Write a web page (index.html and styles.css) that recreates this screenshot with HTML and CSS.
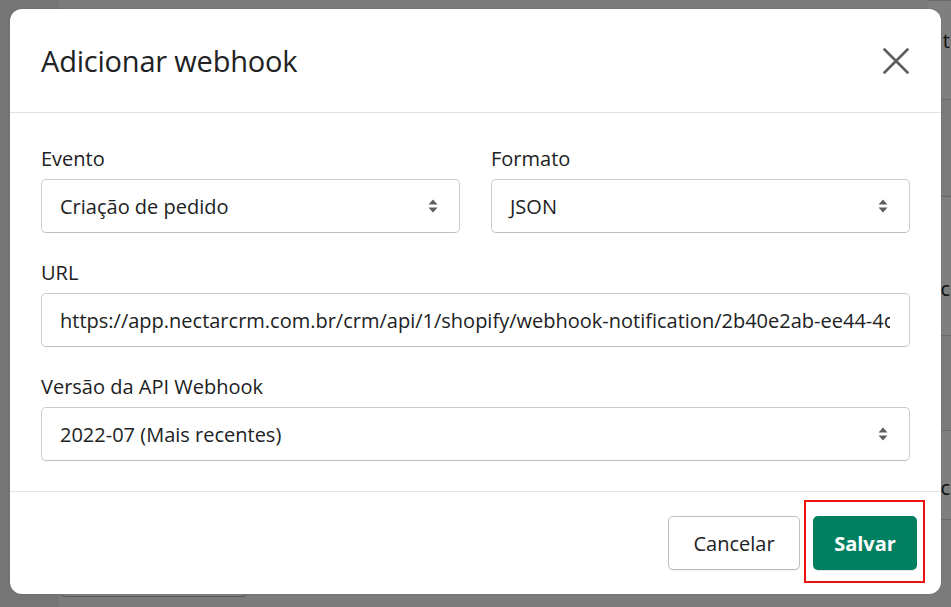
FILE: index.html
```html
<!DOCTYPE html>
<html lang="pt-BR">
<head>
<meta charset="utf-8">
<title>Adicionar webhook</title>
<link rel="stylesheet" href="styles.css">
</head>
<body>
<div class="page">
  <aside class="side"></aside>
  <main class="content">
    <div class="bg-card bg-card-top"><span class="bg-text bg-t1">t</span></div>
    <div class="bg-card bg-card-mid"><span class="bg-text bg-t2">c</span></div>
    <div class="bg-card bg-card-low"><span class="bg-text bg-t3">ic</span></div>
    <div class="bg-button"></div>
  </main>
</div>

<div class="overlay">
  <div class="modal">
    <header class="modal-header">
      <h1 class="modal-title">Adicionar webhook</h1>
      <button class="close" aria-label="Fechar">
        <svg width="26" height="26" viewBox="0 0 26 26"><path d="M1.5 1.5 L24.5 24.5 M24.5 1.5 L1.5 24.5" stroke="#5c5f62" stroke-width="2.6" stroke-linecap="round"/></svg>
      </button>
    </header>
    <section class="modal-body">
      <div class="row">
        <div class="field">
          <label class="label">Evento</label>
          <div class="control select"><span class="value">Criação de pedido</span><span class="arrows"><svg width="10" height="14" viewBox="0 0 10 14"><path d="M5 0.5 L9.5 5.5 H0.5 Z M5 13.5 L9.5 8.5 H0.5 Z" fill="#5c5f62"/></svg></span></div>
        </div>
        <div class="field">
          <label class="label">Formato</label>
          <div class="control select"><span class="value">JSON</span><span class="arrows"><svg width="10" height="14" viewBox="0 0 10 14"><path d="M5 0.5 L9.5 5.5 H0.5 Z M5 13.5 L9.5 8.5 H0.5 Z" fill="#5c5f62"/></svg></span></div>
        </div>
      </div>
      <div class="field">
        <label class="label">URL</label>
        <div class="control text"><span class="value clip">https://app.nectarcrm.com.br/crm/api/1/shopify/webhook-notification/2b40e2ab-ee44-4c</span></div>
      </div>
      <div class="field">
        <label class="label">Versão da API Webhook</label>
        <div class="control select"><span class="value">2022-07 (Mais recentes)</span><span class="arrows"><svg width="10" height="14" viewBox="0 0 10 14"><path d="M5 0.5 L9.5 5.5 H0.5 Z M5 13.5 L9.5 8.5 H0.5 Z" fill="#5c5f62"/></svg></span></div>
      </div>
    </section>
    <footer class="modal-footer">
      <button class="btn btn-secondary">Cancelar</button>
      <span class="highlight"><button class="btn btn-primary">Salvar</button></span>
    </footer>
  </div>
</div>
</body>
</html>
```
FILE: styles.css
```css
* { box-sizing: border-box; }
html, body { margin: 0; padding: 0; }
body {
  width: 951px;
  height: 607px;
  overflow: hidden;
  font-family: "Open Sans", "Noto Sans", sans-serif;
  color: #202223;
  position: relative;
}
.page {
  display: flex;
  width: 951px;
  height: 607px;
  background: #f6f6f7;
}
.side {
  width: 58px;
  background: #ebebeb;
  border-right: 1px solid #e1e3e5;
}
.content {
  flex: 1;
  position: relative;
}
.bg-card {
  position: absolute;
  left: 870px;
  width: 23px;
  background: #ffffff;
  border-top: 1px solid #d2d5d8;
  border-bottom: 1px solid #d2d5d8;
}
.bg-card-top { top: 0; height: 100px; }
.bg-card-mid { top: 196px; height: 140px; border-top: 1px solid #c9cccf; }
.bg-card-low { top: 430px; height: 90px; }
.bg-text {
  position: absolute;
  right: 1px;
  font-size: 20px;
  line-height: 24px;
  color: #202223;
}
.bg-t1 { top: 28px; }
.bg-t2 { top: 80px; }
.bg-t3 { top: 45px; }
.bg-button {
  position: absolute;
  left: 2px;
  top: 560px;
  width: 187px;
  height: 36px;
  border-radius: 5px;
  background: #fff;
  box-shadow: 0 1px 0 rgba(0,0,0,.3);
}
.overlay {
  position: absolute;
  inset: 0;
  background: rgba(0, 0, 0, 0.5);
}
.modal {
  position: absolute;
  left: 10px;
  top: 9px;
  width: 931px;
  background: #ffffff;
  border-radius: 12px;
  box-shadow: 0 0 2px rgba(0,0,0,.15);
  display: flex;
  flex-direction: column;
}
.modal-header {
  height: 104px;
  display: flex;
  align-items: center;
  justify-content: space-between;
  padding: 0 31px 0 31px;
  border-bottom: 1px solid #e1e3e5;
}
.modal-title {
  margin: 0;
  font-size: 29px;
  font-weight: 400;
  color: #202223;
  letter-spacing: -0.2px;
}
.close {
  border: 0;
  background: none;
  padding: 0;
  width: 26px;
  height: 26px;
  margin-right: 1px;
  display: flex;
}
.modal-body {
  padding: 34px 31px 30px;
  display: flex;
  flex-direction: column;
  gap: 28px;
  border-bottom: 1px solid #e1e3e5;
}
.row {
  display: grid;
  grid-template-columns: 1fr 1fr;
  gap: 31px;
}
.field {
  display: flex;
  flex-direction: column;
  gap: 8px;
}
.label {
  font-size: 20px;
  line-height: 24px;
  color: #202223;
}
.control {
  height: 54px;
  border: 1px solid #c9cccf;
  border-bottom-color: #babfc3;
  border-radius: 5px;
  display: flex;
  align-items: center;
  padding: 0 19px 0 18px;
  font-size: 20px;
  color: #202223;
  background: #fff;
  overflow: hidden;
}
.value {
  flex: 1;
  white-space: nowrap;
}
.clip {
  overflow: hidden;
}
.arrows {
  display: flex;
  margin-right: 2px;
}
.modal-footer {
  display: flex;
  justify-content: flex-end;
  align-items: center;
  gap: 13px;
  padding: 24px 24px 24px;
}
.btn {
  height: 54px;
  border-radius: 5px;
  font-family: inherit;
  font-size: 20px;
  padding: 0 20px;
  cursor: pointer;
}
.btn-secondary {
  width: 132px;
  background: #fff;
  color: #202223;
  border: 1px solid #babfc3;
  box-shadow: 0 1px 0 rgba(0,0,0,.05);
}
.btn-primary {
  width: 104px;
  background: #008060;
  color: #fff;
  border: 0;
  font-weight: 700;
  box-shadow: 0 1px 0 rgba(0,0,0,.1);
}
.highlight {
  position: relative;
  display: flex;
}
.highlight::after {
  content: "";
  position: absolute;
  left: -9px;
  right: -8px;
  top: -16px;
  bottom: -13px;
  border: 2px solid #ee1111;
}
```
